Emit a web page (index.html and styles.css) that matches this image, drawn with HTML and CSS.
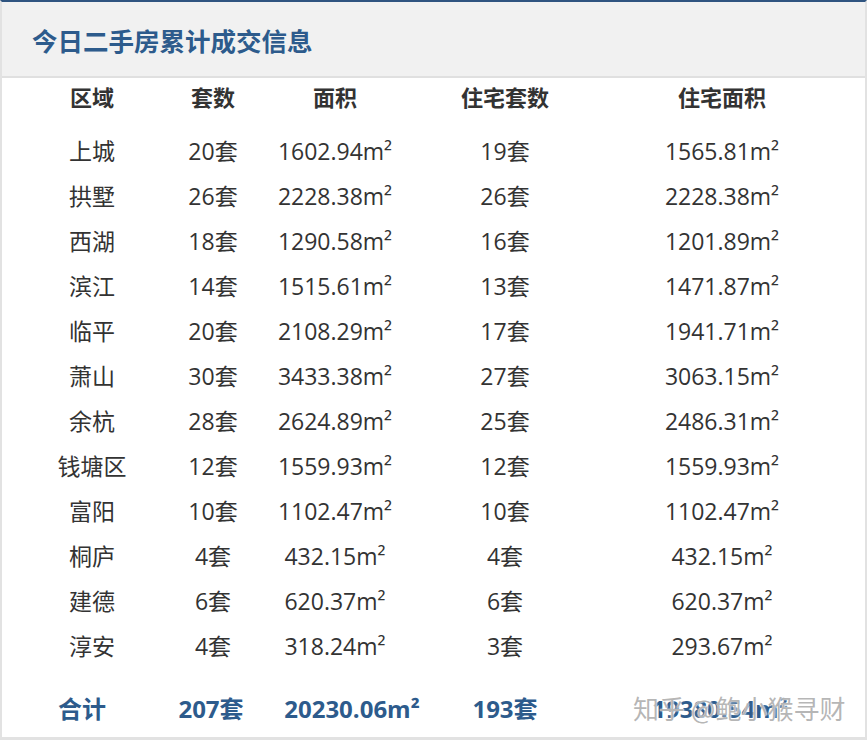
FILE: index.html
```html
<!DOCTYPE html>
<html lang="zh">
<head>
<meta charset="utf-8">
<link rel="stylesheet" href="styles.css">
</head>
<body>
<div class="panel">
  <div class="title-bar"><h1 class="title">今日二手房累计成交信息</h1></div>
  <div class="table">
    <div class="row head">
      <div class="cell">区域</div><div class="cell">套数</div><div class="cell">面积</div><div class="cell">住宅套数</div><div class="cell">住宅面积</div>
    </div>
    <div class="row"><div class="cell">上城</div><div class="cell">20套</div><div class="cell">1602.94m²</div><div class="cell">19套</div><div class="cell">1565.81m²</div></div>
    <div class="row"><div class="cell">拱墅</div><div class="cell">26套</div><div class="cell">2228.38m²</div><div class="cell">26套</div><div class="cell">2228.38m²</div></div>
    <div class="row"><div class="cell">西湖</div><div class="cell">18套</div><div class="cell">1290.58m²</div><div class="cell">16套</div><div class="cell">1201.89m²</div></div>
    <div class="row"><div class="cell">滨江</div><div class="cell">14套</div><div class="cell">1515.61m²</div><div class="cell">13套</div><div class="cell">1471.87m²</div></div>
    <div class="row"><div class="cell">临平</div><div class="cell">20套</div><div class="cell">2108.29m²</div><div class="cell">17套</div><div class="cell">1941.71m²</div></div>
    <div class="row"><div class="cell">萧山</div><div class="cell">30套</div><div class="cell">3433.38m²</div><div class="cell">27套</div><div class="cell">3063.15m²</div></div>
    <div class="row"><div class="cell">余杭</div><div class="cell">28套</div><div class="cell">2624.89m²</div><div class="cell">25套</div><div class="cell">2486.31m²</div></div>
    <div class="row"><div class="cell">钱塘区</div><div class="cell">12套</div><div class="cell">1559.93m²</div><div class="cell">12套</div><div class="cell">1559.93m²</div></div>
    <div class="row"><div class="cell">富阳</div><div class="cell">10套</div><div class="cell">1102.47m²</div><div class="cell">10套</div><div class="cell">1102.47m²</div></div>
    <div class="row"><div class="cell">桐庐</div><div class="cell">4套</div><div class="cell">432.15m²</div><div class="cell">4套</div><div class="cell">432.15m²</div></div>
    <div class="row"><div class="cell">建德</div><div class="cell">6套</div><div class="cell">620.37m²</div><div class="cell">6套</div><div class="cell">620.37m²</div></div>
    <div class="row"><div class="cell">淳安</div><div class="cell">4套</div><div class="cell">318.24m²</div><div class="cell">3套</div><div class="cell">293.67m²</div></div>
    <div class="row total">
      <div class="cell">合计</div><div class="cell">207套</div><div class="cell">20230.06m²</div><div class="cell">193套</div><div class="cell">19380.54m²</div>
    </div>
  </div>
  <div class="watermark">知乎 @鲍小猴寻财</div>
</div>
</body>
</html>
```
FILE: styles.css
```css
* { box-sizing: border-box; }
html, body { margin: 0; padding: 0; background: #fff; }
body {
  font-family: "Open Sans", "Noto Sans CJK SC", sans-serif;
  color: #333;
}
.panel {
  position: relative;
  width: 867px;
  height: 740px;
  border-top: 2px solid #2f5480;
  border-left: 2px solid #e2e2e2;
  border-right: 2px solid #e2e2e2;
  border-bottom: 3px solid #e2e2e2;
  background: #fff;
}
.title-bar {
  height: 76px;
  background: #f1f1f1;
  border-bottom: 2px solid #e0e0e0;
  display: flex;
  align-items: center;
  padding-left: 30px;
}
.title {
  margin: 0;
  font-size: 25.5px;
  font-weight: 700;
  color: #2d5b8c;
  font-family: "Noto Sans CJK SC", sans-serif;
}
.table {
  padding-left: 30px;
}
.row {
  display: grid;
  grid-template-columns: 120px 122px 122px 218px 216px;
  height: 45px;
  align-items: center;
}
.cell {
  display: flex;
  justify-content: center;
  white-space: nowrap;
  font-size: 23px;
  line-height: 1;
}
.row.head {
  height: 36px;
  margin-bottom: 15px;
}
.row.head .cell {
  font-family: "Noto Sans CJK SC", sans-serif;
  font-weight: 700;
  font-size: 22px;
  color: #333;
}
.row.total {
  margin-top: 17px;
  grid-template-columns: 100px 158px 124px 182px 248px;
}
.row.total .cell {
  font-weight: 700;
  color: #2d5b8c;
  font-size: 24px;
}
.watermark {
  position: absolute;
  left: 631px;
  top: 687px;
  font-family: "Noto Sans CJK SC", sans-serif;
  font-size: 26px;
  color: rgba(150, 150, 150, 0.7);
  text-shadow: 0 0 2px #fff, 0 0 1px #fff;
  white-space: nowrap;
}
```
